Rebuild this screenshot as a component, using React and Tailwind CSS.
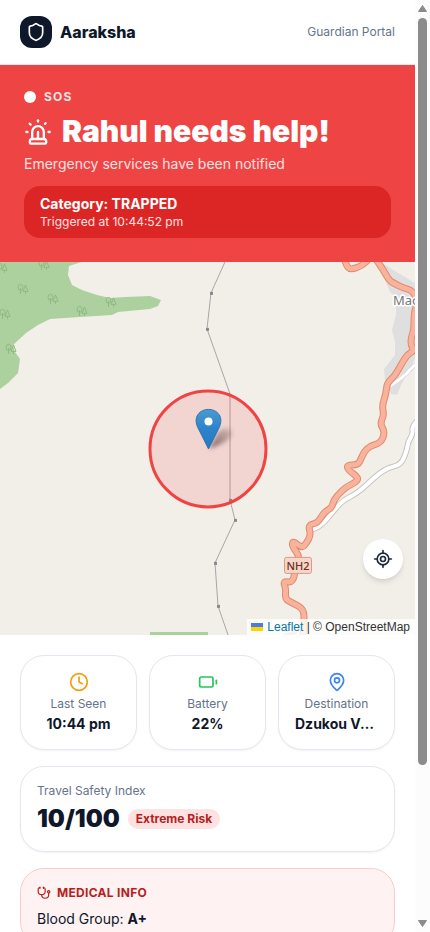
import React from "react";
import {
  Shield,
  Siren,
  Clock,
  Battery,
  MapPin,
  LocateFixed,
  Stethoscope,
} from "lucide-react";

const TREES = [
  [2, 6],
  [44, 3],
  [23, 27],
  [53, 37],
  [111, 40],
  [82, 49],
  [5, 52],
  [11, 87],
];

const NODES = [
  [211, 31],
  [207, 67],
  [230, 238],
  [235, 258],
  [215, 301],
  [218, 344],
];

const HIGHWAY = [
  [375, -4], [382, 6], [389, 18], [393, 21], [403, 26], [411, 28], [416, 34], [417, 42],
  [414, 52], [414, 68], [411, 76], [411, 83], [414, 89], [408, 92], [402, 101], [395, 114],
  [387, 121], [386, 132], [382, 144], [384, 153], [380, 162], [385, 170], [381, 181],
  [370, 184], [364, 190], [361, 197], [358, 203], [347, 203], [348, 208], [359, 216],
  [355, 221], [346, 225], [334, 237], [332, 246], [324, 250], [318, 261], [308, 263],
  [311, 273], [306, 282], [302, 286], [293, 279], [292, 284], [300, 295], [296, 304],
  [293, 321], [283, 319], [286, 327], [285, 337], [292, 341], [304, 347], [304, 362],
  [303, 376],
];
const HIGHWAY_LOOP = [[344, -4], [346, 3], [350, 8], [362, 4], [369, -3]];
const SIDE_ROAD = [
  [418, 158], [412, 164], [413, 172], [408, 180], [407, 188], [401, 203], [387, 206],
  [375, 215], [358, 231], [342, 239], [333, 250], [322, 263], [314, 267],
];
const LANE = [[418, 101], [411, 106], [406, 113], [390, 124]];

// Rounds a polyline by curving through the midpoints of its segments.
function smooth(points) {
  let d = `M${points[0][0]} ${points[0][1]}`;
  for (let i = 1; i < points.length - 1; i += 1) {
    const [x, y] = points[i];
    const [nx, ny] = points[i + 1];
    d += ` Q${x} ${y} ${(x + nx) / 2} ${(y + ny) / 2}`;
  }
  const [lx, ly] = points[points.length - 1];
  return `${d} L${lx} ${ly}`;
}

function MapArt() {
  return (
    <svg
      className="absolute inset-0 h-full w-full"
      viewBox="0 0 415 373"
      preserveAspectRatio="xMidYMid slice"
      aria-hidden="true"
    >
      <defs>
        <linearGradient id="pinFill" x1="0" y1="0" x2="0" y2="1">
          <stop offset="0" stopColor="#4a9bd3" />
          <stop offset="0.5" stopColor="#2b83cb" />
          <stop offset="1" stopColor="#2779c4" />
        </linearGradient>
        <linearGradient id="pinShade" x1="0" y1="1" x2="1" y2="0">
          <stop offset="0" stopColor="#4a3030" stopOpacity="0.7" />
          <stop offset="1" stopColor="#4a3030" stopOpacity="0.15" />
        </linearGradient>
        <filter id="soft" x="-50%" y="-50%" width="200%" height="200%">
          <feGaussianBlur stdDeviation="2" />
        </filter>
      </defs>
      <rect width="415" height="373" fill="#f2efe9" />
      <path
        d="M0 0 H82 L69 4 L68 13 L72 23 L82 28 L97 33 L110 36 L125 35 L150 34 L161 38 L158 44 L150 47 L118 50 L112 53 L80 55 L50 57 L38 63 L26 71 L13 83 L15 90 L20 97 L18 111 L8 121 L0 127 Z M150 370 H208 V373 H150 Z"
        fill="#add19e"
      />
      <g fill="none" stroke="#8fba81" strokeWidth="1">
        {TREES.map(([x, y]) => (
          <g key={`${x}-${y}`} transform={`translate(${x} ${y})`}>
            <ellipse cx="-2.500" cy="-1.500" rx="2.500" ry="3" />
            <path d="M-2.500 -1 V5 M2.500 -4 L0 2.500 H5 Z M2.500 2.500 V5" />
          </g>
        ))}
      </g>
      <path
        d="M381 0 L390 6 L415 21 V97 L401 123 L397 133 L391 132 L385 118 L384 107 L395 93 L395 80 L392 68 L396 53 L396 35 L390 30 L386 20 Z"
        fill="#e0dfdf"
      />
      <g fill="none" strokeLinejoin="round" strokeLinecap="round">
        <path d={smooth(SIDE_ROAD)} stroke="#c6c4c0" strokeWidth="6" />
        <path d={smooth(LANE)} stroke="#d0cecb" strokeWidth="4" />
        <path d={smooth(SIDE_ROAD)} stroke="#fff" strokeWidth="4" />
        <path d={smooth(LANE)} stroke="#fff" strokeWidth="3" />
        <path d={smooth(HIGHWAY)} stroke="#e08a6c" strokeWidth="7" />
        <path d={smooth(HIGHWAY_LOOP)} stroke="#e08a6c" strokeWidth="7" />
        <path d={smooth(HIGHWAY)} stroke="#f9b29c" strokeWidth="5" />
        <path d={smooth(HIGHWAY_LOOP)} stroke="#f9b29c" strokeWidth="5" />
        <path d="M284 374 L294 371 L303 362" stroke="#f9b29c" strokeWidth="4" />
      </g>
      <path
        d="M225 0 L211 31 L207 67 L230 132 V238 L235 258 L215 301 L218 344 L228 373"
        fill="none"
        stroke="#a8a6a6"
        strokeWidth="1"
      />
      {NODES.map(([x, y]) => (
        <rect key={`${x}-${y}`} x={x - 1} y={y - 1} width="3" height="3" fill="#8a8990" />
      ))}
      <rect x="284.500" y="295.500" width="27" height="16" rx="2" fill="#f7d5c9" stroke="#dd9a83" />
      <text
        x="298"
        y="308"
        textAnchor="middle"
        fontSize="11"
        fontFamily="Noto Sans, sans-serif"
        fontWeight="500"
        fill="#6b2f1c"
      >
        NH2
      </text>
      <text
        x="393"
        y="43"
        fontSize="13"
        fontFamily="Noto Sans, sans-serif"
        fill="#777"
        stroke="#fff"
        strokeWidth="3"
        strokeLinejoin="round"
        paintOrder="stroke"
      >
        Mao
      </text>
      <circle
        cx="208"
        cy="187"
        r="58"
        fill="#ef4444"
        fillOpacity="0.15"
        stroke="#ef4444"
        strokeWidth="3"
      />
      <path
        d="M209 187 L216 174 C220 165 232 164 232 171 C231 179 219 183 209 187 Z"
        fill="url(#pinShade)"
        filter="url(#soft)"
      />
      <path
        d="M208.500 187 L198.500 167 C192 155 200 147.500 208.500 147.500 C217 147.500 225 155 218.500 167 Z"
        fill="url(#pinFill)"
        stroke="#3274ac"
        strokeWidth="1"
      />
      <circle cx="208.500" cy="159.500" r="4" fill="#fff" />
    </svg>
  );
}

function StatCard({ icon: Icon, color, label, value }) {
  return (
    <div className="min-w-0 rounded-3xl border border-[#e2e8f0] bg-white p-4 text-center shadow-xs">
      <Icon size={20} className={`mx-auto ${color}`} />
      <p className="mt-1 text-xs text-[#64748b]">{label}</p>
      <p className="mt-0.5 truncate text-sm leading-[19px] font-bold">{value}</p>
    </div>
  );
}

function ScrollRail() {
  return (
    <div className="flex w-[15px] shrink-0 flex-col items-center bg-[#fcfcfc]" aria-hidden="true">
      <svg width="15" height="18" viewBox="0 0 15 18">
        <path d="M7.500 5.500 L11.500 11.500 H3.500 Z" fill="#8b8b8b" stroke="#8b8b8b" strokeLinejoin="round" />
      </svg>
      <div className="flex w-[9px] flex-1 flex-col">
        <div className="h-5/6 rounded-full bg-[#8b8b8b]" />
      </div>
      <svg width="15" height="18" viewBox="0 0 15 18">
        <path d="M7.500 12.500 L11.500 6.500 H3.500 Z" fill="#8b8b8b" stroke="#8b8b8b" strokeLinejoin="round" />
      </svg>
    </div>
  );
}

export default function App() {
  return (
    <div className="flex h-screen overflow-hidden bg-white font-[Inter,sans-serif] text-[#0f172a]">
      <div className="min-w-0 flex-1 overflow-hidden">
        <header className="flex items-center justify-between border-b border-[#e2e8f0] px-5 py-4">
          <div className="flex items-center gap-2">
            <div className="flex size-8 items-center justify-center rounded-xl bg-[#0f172a] text-white">
              <Shield size={20} />
            </div>
            <span className="font-extrabold">Aaraksha</span>
          </div>
          <span className="text-xs text-[#64748b]">Guardian Portal</span>
        </header>

        <section className="bg-[#ef4444] p-6 text-white">
          <div className="flex items-center gap-2">
            <span className="size-3 rounded-full bg-white" />
            <span className="text-xs font-bold tracking-widest text-[#fee2e2]">SOS</span>
          </div>
          <h1 className="mt-2 flex items-center gap-2.5 text-3xl leading-[37px] font-black">
            <Siren size={28} />
            Rahul needs help!
          </h1>
          <p className="mt-1 text-sm text-[#fee2e2]">Emergency services have been notified</p>
          <div className="mt-3 rounded-2xl bg-[#dc2626] px-4 py-2">
            <p className="text-sm font-bold">Category: TRAPPED</p>
            <p className="text-xs text-[#fee2e2]">Triggered at 10:44:52 pm</p>
          </div>
        </section>

        <section className="relative h-[40vh] overflow-hidden" aria-label="Last known location">
          <MapArt />
          <button
            type="button"
            aria-label="Centre on location"
            className="absolute right-3 bottom-14 flex size-10 items-center justify-center rounded-full bg-white text-[#1e293b] shadow-md"
          >
            <LocateFixed size={20} />
          </button>
          <div className="absolute right-0 bottom-0 flex h-4 items-center bg-white/80 pr-[5px] pl-1 font-[Liberation_Sans,Arial,sans-serif] text-xs leading-4 text-[#333]">
            <a href="#leaflet" className="flex items-center gap-1 text-[#0078a8]">
              <svg width="12" height="8" viewBox="0 0 12 8" aria-hidden="true">
                <path fill="#4c7be1" d="M0 0h12v4H0z" />
                <path fill="#ffd500" d="M0 4h12v4H0z" />
              </svg>
              Leaflet
            </a>
            <span className="whitespace-pre"> | © OpenStreetMap</span>
          </div>
        </section>

        <main className="flex flex-col gap-4 p-5">
          <div className="grid grid-cols-3 gap-3">
            <StatCard icon={Clock} color="text-[#f59e0b]" label="Last Seen" value="10:44 pm" />
            <StatCard icon={Battery} color="text-[#22c55e]" label="Battery" value="22%" />
            <StatCard icon={MapPin} color="text-[#3b82f6]" label="Destination" value="Dzukou Valley" />
          </div>

          <section className="rounded-3xl border border-[#e2e8f0] bg-white p-4 shadow-xs">
            <p className="text-xs text-[#64748b]">Travel Safety Index</p>
            <div className="mt-1 flex items-center gap-2">
              <span className="text-2xl font-black">10/100</span>
              <span className="rounded-full bg-[#fee2e2] px-2 py-0.5 text-xs font-bold text-[#b91c1c]">
                Extreme Risk
              </span>
            </div>
          </section>

          <section className="rounded-3xl border border-[#fecaca] bg-[#fef2f2] p-4">
            <h2 className="flex items-center gap-1.5 text-xs font-bold tracking-wide text-[#b91c1c]">
              <Stethoscope size={14} />
              MEDICAL INFO
            </h2>
            <p className="mt-2 text-sm">
              Blood Group: <strong className="font-bold">A+</strong>
            </p>
          </section>
        </main>
      </div>
      <ScrollRail />
    </div>
  );
}
